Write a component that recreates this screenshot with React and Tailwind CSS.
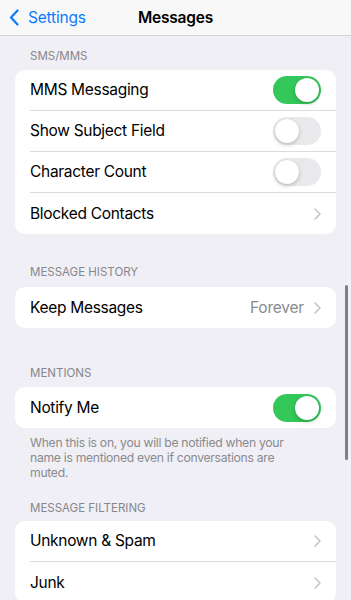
import React, { useState } from 'react'


function Toggle({ on, onClick }) {
  return (
    <button
      onClick={onClick}
      className={"relative w-[48px] h-[28px] rounded-full shrink-0 transition-colors " + (on ? "bg-[#34c759]" : "bg-[#e9e9eb]")}>
      <span
        className={"absolute top-[2px] w-[24px] h-[24px] rounded-full bg-white shadow-[0_2px_4px_rgba(0,0,0,0.18),0_0_1px_rgba(0,0,0,0.15)] transition-all " + (on ? "left-[22px]" : "left-[2px]")}
      ></span>
    </button>
  )
}

function Chevron() {
  return (
    <svg width="7" height="12" viewBox="0 0 7 12" className="shrink-0">
      <path d="M1 1l5 5-5 5" fill="none" stroke="#c4c4c7" strokeWidth="1.6" strokeLinecap="round" strokeLinejoin="round" />
    </svg>
  )
}

function Row({ label, last, children }) {
  return (
    <div className="pl-[15px]">
      <div className={"h-[41px] flex items-center justify-between pr-[15px] " + (last ? "" : "border-b border-[#dcdce0]")}>
        <span className="text-[15.5px] text-black tracking-[-0.3px]">{label}</span>
        {children}
      </div>
    </div>
  )
}

function SectionTitle({ children, className }) {
  return (
    <div className={"px-[15px] h-[14px] leading-[14px] text-[11.5px] text-[#86868b] uppercase " + className}>
      {children}
    </div>
  )
}

export default function App() {
  const [mms, setMms] = useState(true)
  const [subject, setSubject] = useState(false)
  const [count, setCount] = useState(false)
  const [notify, setNotify] = useState(true)

  return (
    <div
      className="relative w-[351px] h-[600px] overflow-hidden bg-[#f0eff5]"
      style={{ fontFamily: "Inter, 'Liberation Sans', sans-serif" }}>
      {/* Nav bar */}
      <div className="relative h-[36px] bg-[#f8f8f9] border-b border-[#d4d4d8] flex items-center">
        <div className="flex items-center pl-[9px] gap-[9px] text-[#0a7aff]">
          <svg width="10" height="17" viewBox="0 0 10 17">
            <path d="M8.5 1.5L2 8.5l6.5 7" fill="none" stroke="#0a7aff" strokeWidth="2.2" strokeLinecap="round" strokeLinejoin="round" />
          </svg>
          <span className="text-[15.5px] tracking-[-0.2px]">Settings</span>
        </div>
        <div className="absolute inset-x-0 text-center text-[15.5px] font-semibold text-black pointer-events-none tracking-[-0.2px]">
          Messages
        </div>
      </div>

      <div className="px-[15px]">
        <SectionTitle className="mt-[13px] mb-[7px]">SMS/MMS</SectionTitle>
        <div className="bg-white rounded-[10px] overflow-hidden">
          <Row label="MMS Messaging">
            <Toggle on={mms} onClick={() => setMms(!mms)} />
          </Row>
          <Row label="Show Subject Field">
            <Toggle on={subject} onClick={() => setSubject(!subject)} />
          </Row>
          <Row label="Character Count">
            <Toggle on={count} onClick={() => setCount(!count)} />
          </Row>
          <Row label="Blocked Contacts" last>
            <Chevron />
          </Row>
        </div>

        <SectionTitle className="mt-[31px] mb-[8px]">Message History</SectionTitle>
        <div className="bg-white rounded-[10px] overflow-hidden">
          <Row label="Keep Messages" last>
            <div className="flex items-center gap-[10px]">
              <span className="text-[15.5px] text-[#8a8a8e] tracking-[-0.2px]">Forever</span>
              <Chevron />
            </div>
          </Row>
        </div>

        <SectionTitle className="mt-[38px] mb-[7px]">Mentions</SectionTitle>
        <div className="bg-white rounded-[10px] overflow-hidden">
          <Row label="Notify Me" last>
            <Toggle on={notify} onClick={() => setNotify(!notify)} />
          </Row>
        </div>
        <p className="mt-[7px] pl-[15px] pr-[40px] text-[12.2px] leading-[15px] tracking-[-0.3px] text-[#8a8a8e]">
          When this is on, you will be notified when your name is mentioned even if conversations are muted.
        </p>

        <SectionTitle className="mt-[21px] mb-[6px]">Message Filtering</SectionTitle>
        <div className="bg-white rounded-[10px] overflow-hidden">
          <Row label="Unknown &amp; Spam">
            <Chevron />
          </Row>
          <Row label="Junk" last>
            <Chevron />
          </Row>
        </div>
      </div>

      {/* scroll indicator */}
      <div className="absolute right-[3px] top-[285px] w-[3px] h-[175px] rounded-full bg-[#7f7f83]"></div>
    </div>
  )
}
